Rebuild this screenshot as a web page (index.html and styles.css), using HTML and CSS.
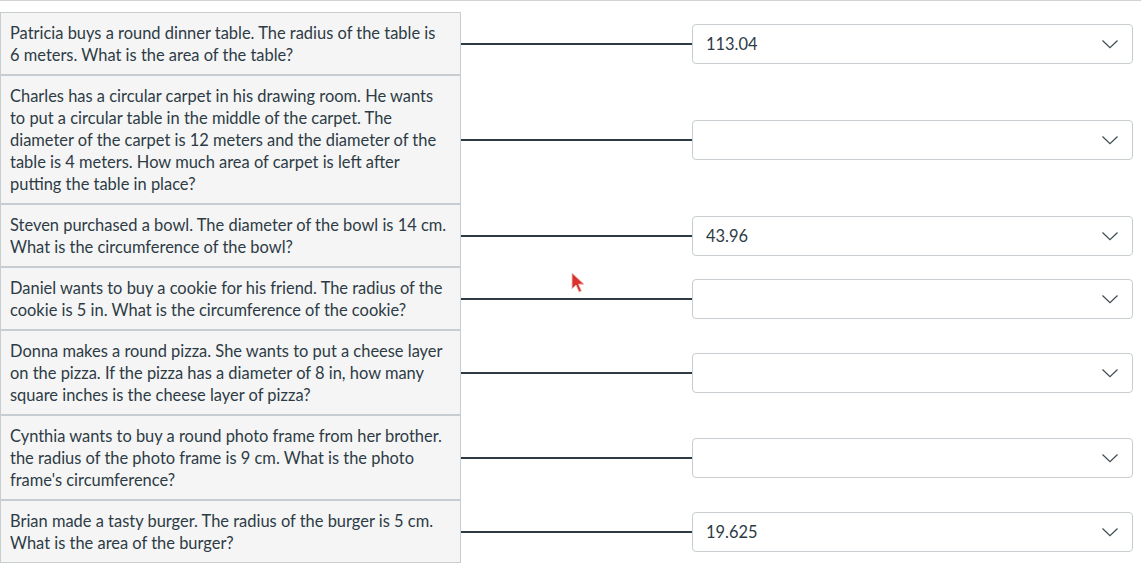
FILE: index.html
```html
<!DOCTYPE html>
<html>
<head>
<meta charset="utf-8">
<link rel="stylesheet" href="styles.css">
</head>
<body>
<div class="page">
  <div class="row">
    <div class="q">Patricia buys a round dinner table. The radius of the table is 6 meters. What is the area of the table?</div>
    <div class="link"></div>
    <div class="sel"><span class="val">113.04</span><svg class="chev" width="18" height="10" viewBox="0 0 18 10"><path d="M1.5 1.5 L9 8.6 L16.5 1.5" fill="none" stroke="#3d4a54" stroke-width="1.2"/></svg></div>
  </div>
  <div class="row">
    <div class="q">Charles has a circular carpet in his drawing room. He wants to put a circular table in the middle of the carpet. The diameter of the carpet is 12 meters and the diameter of the table is 4 meters. How much area of carpet is left after putting the table in place?</div>
    <div class="link"></div>
    <div class="sel"><span class="val"></span><svg class="chev" width="18" height="10" viewBox="0 0 18 10"><path d="M1.5 1.5 L9 8.6 L16.5 1.5" fill="none" stroke="#3d4a54" stroke-width="1.2"/></svg></div>
  </div>
  <div class="row">
    <div class="q">Steven purchased a bowl. The diameter of the bowl is 14 cm. What is the circumference of the bowl?</div>
    <div class="link"></div>
    <div class="sel"><span class="val">43.96</span><svg class="chev" width="18" height="10" viewBox="0 0 18 10"><path d="M1.5 1.5 L9 8.6 L16.5 1.5" fill="none" stroke="#3d4a54" stroke-width="1.2"/></svg></div>
  </div>
  <div class="row">
    <div class="q">Daniel wants to buy a cookie for his friend. The radius of the cookie is 5 in. What is the circumference of the cookie?</div>
    <div class="link"></div>
    <div class="sel"><span class="val"></span><svg class="chev" width="18" height="10" viewBox="0 0 18 10"><path d="M1.5 1.5 L9 8.6 L16.5 1.5" fill="none" stroke="#3d4a54" stroke-width="1.2"/></svg></div>
  </div>
  <div class="row">
    <div class="q">Donna makes a round pizza. She wants to put a cheese layer on the pizza. If the pizza has a diameter of 8 in, how many square inches is the cheese layer of pizza?</div>
    <div class="link"></div>
    <div class="sel"><span class="val"></span><svg class="chev" width="18" height="10" viewBox="0 0 18 10"><path d="M1.5 1.5 L9 8.6 L16.5 1.5" fill="none" stroke="#3d4a54" stroke-width="1.2"/></svg></div>
  </div>
  <div class="row">
    <div class="q">Cynthia wants to buy a round photo frame from her brother. the radius of the photo frame is 9 cm. What is the photo frame's circumference?</div>
    <div class="link"></div>
    <div class="sel"><span class="val"></span><svg class="chev" width="18" height="10" viewBox="0 0 18 10"><path d="M1.5 1.5 L9 8.6 L16.5 1.5" fill="none" stroke="#3d4a54" stroke-width="1.2"/></svg></div>
  </div>
  <div class="row">
    <div class="q">Brian made a tasty burger. The radius of the burger is 5 cm. What is the area of the burger?</div>
    <div class="link"></div>
    <div class="sel"><span class="val">19.625</span><svg class="chev" width="18" height="10" viewBox="0 0 18 10"><path d="M1.5 1.5 L9 8.6 L16.5 1.5" fill="none" stroke="#3d4a54" stroke-width="1.2"/></svg></div>
  </div>
  <svg class="cursor" width="16" height="22" viewBox="0 0 16 22"><path d="M1 1 L1 17 L5 13 L8 20 L10.5 19 L7.6 12.2 L13 12.2 Z" fill="#d9312b" stroke="#f0c4c0" stroke-width="0.9"/></svg>
</div>
</body>
</html>
```

FILE: styles.css
```css
html, body {
  margin: 0;
  padding: 0;
  background: #ffffff;
}
.page {
  position: relative;
  border-top: 1px solid #cfd3d6;
  padding-top: 11px;
  font-family: Lato, "Liberation Sans", sans-serif;
  font-size: 16.45px;
  line-height: 22px;
  color: #2d3b45;
  width: 1141px;
  height: 554px;
  overflow: hidden;
}
.row {
  display: flex;
  align-items: center;
}
.q {
  width: 438px;
  flex: none;
  padding: 9px 12px 8px 9px;
  background: #f5f5f5;
  border: 1px solid #c7cdd1;
}
.link {
  width: 231px;
  flex: none;
  height: 2px;
  background: #2d3b45;
}
.sel {
  flex: none;
  height: 38px;
  width: 413px;
  border: 1px solid #c7cdd1;
  border-radius: 4px;
  background: #fff;
  display: flex;
  align-items: center;
  justify-content: space-between;
  padding: 0 13px 0 13px;
}
.chev {
  display: block;
}
.cursor {
  position: absolute;
  left: 571px;
  top: 271px;
}
```
